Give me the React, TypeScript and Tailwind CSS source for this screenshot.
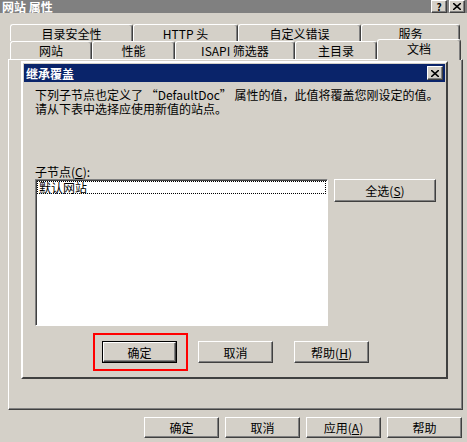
import React from "react";

const raised =
  "border border-t-white border-l-white border-r-[#404040] border-b-[#404040] shadow-[inset_-1px_-1px_0_0_#808080] bg-[#D4D0C8]";

interface BtnProps {
  children: React.ReactNode;
  className?: string;
  isDefault?: boolean;
}

const Btn = ({ children, className = "", isDefault }: BtnProps) => {
  if (isDefault) {
    return (
      <div className={`border border-black flex ${className}`}>
        <div className={`${raised} flex-1 flex items-center justify-center`}>{children}</div>
      </div>
    );
  }
  return <div className={`${raised} flex items-center justify-center ${className}`}>{children}</div>;
};

interface TabProps {
  label: string;
  className?: string;
}

const Tab = ({ label, className = "" }: TabProps) => (
  <div
    className={`border-t border-l border-r border-t-white border-l-white border-r-[#404040] shadow-[inset_-1px_0_0_0_#808080] rounded-t-[3px] bg-[#D4D0C8] flex items-center justify-center ${className}`}
  >
    {label}
  </div>
);

const CapBtn = ({ children }: { children: React.ReactNode }) => (
  <div className={`${raised} w-[16px] h-[13px] flex items-center justify-center text-[10px] font-bold leading-[10px] text-black`}>
    {children}
  </div>
);

export default function App() {
  return (
    <div className="w-[467px] h-[442px] bg-[#D4D0C8] flex flex-col overflow-hidden text-[12px] leading-[13px] text-black font-['Noto_Sans_CJK_SC','Liberation_Sans',sans-serif]">
      {/* title bar */}
      <div className="h-[13px] bg-[#808080] flex items-center justify-between pl-[2px] pr-[2px]">
        <span className="text-white font-bold text-[12px] leading-[13px]">网站 属性</span>
        <div className="flex gap-[2px]">
          <CapBtn>?</CapBtn>
          <CapBtn>
            <svg width="8" height="7" viewBox="0 0 8 7">
              <path d="M0 0 L8 7 M8 0 L0 7" stroke="black" strokeWidth="1.6" />
            </svg>
          </CapBtn>
        </div>
      </div>

      {/* tab rows */}
      <div className="mt-[11px] pl-[10px] flex h-[17px]">
        <Tab label="目录安全性" className="w-[123px]" />
        <Tab label="HTTP 头" className="w-[105px]" />
        <Tab label="自定义错误" className="w-[123px]" />
        <Tab label="服务" className="w-[99px]" />
      </div>
      <div className="pl-[10px] flex items-end h-[18px]">
        <Tab label="网站" className="w-[82px] h-[18px]" />
        <Tab label="性能" className="w-[83px] h-[18px]" />
        <Tab label="ISAPI 筛选器" className="w-[120px] h-[18px]" />
        <Tab label="主目录" className="w-[82px] h-[18px]" />
        <Tab label="文档" className="w-[84px] h-[21px] -mb-[1px] relative z-10 pb-[3px]" />
      </div>

      {/* tab panel */}
      <div className="ml-[8px] w-[455px] h-[351px] border border-t-white border-l-white border-r-[#404040] border-b-[#404040] shadow-[inset_-1px_-1px_0_0_#808080] pt-[1px] pl-[12px]">
        {/* inherit override dialog */}
        <div className="w-[427px] h-[318px] border-2 border-t-white border-l-white border-r-[#404040] border-b-[#404040] p-[1px] flex flex-col">
          <div className="h-[18px] bg-[#0A246A] flex items-center justify-between pl-[2px] pr-[2px]">
            <span className="text-white font-bold text-[12px]">继承覆盖</span>
            <div className={`${raised} w-[16px] h-[14px] flex items-center justify-center`}>
              <svg width="8" height="7" viewBox="0 0 8 7">
                <path d="M0 0 L8 7 M8 0 L0 7" stroke="black" strokeWidth="1.6" />
              </svg>
            </div>
          </div>

          <div className="pl-[11px] flex flex-col">
            <p className="mt-[6px] leading-[14px]">
              下列子节点也定义了 “DefaultDoc” 属性的值，此值将覆盖您刚设定的值。
              <br />
              请从下表中选择应使用新值的站点。
            </p>

            <div className="mt-[49px]">
              子节点(<u>C</u>):
            </div>

            <div className="mt-[1px] flex gap-[6px] items-start">
              <div className="w-[293px] h-[147px] bg-white border border-t-[#808080] border-l-[#808080] border-r-white border-b-white shadow-[inset_1px_1px_0_0_#404040] p-[1px]">
                <div className="border border-dotted border-black h-[13px] leading-[11px] pl-[1px]">默认网站</div>
              </div>
              <Btn className="w-[102px] h-[23px]">
                全选(<u>S</u>)
              </Btn>
            </div>

            <div className="mt-[15px] pl-[67px] flex gap-[21px]">
              <div className="relative">
                <Btn isDefault className="w-[75px] h-[22px]">
                  确定
                </Btn>
                <div className="absolute -left-[9px] -right-[11px] -top-[8px] -bottom-[8px] border-2 border-[#FF0000]" />
              </div>
              <Btn className="w-[75px] h-[22px]">取消</Btn>
              <Btn className="w-[75px] h-[22px]">
                帮助(<u>H</u>)
              </Btn>
            </div>
          </div>
        </div>
      </div>

      {/* window buttons */}
      <div className="mt-[7px] flex justify-end gap-[6px] pr-[5px]">
        <Btn className="w-[75px] h-[21px]">确定</Btn>
        <Btn className="w-[75px] h-[21px]">取消</Btn>
        <Btn className="w-[75px] h-[21px]">
          应用(<u>A</u>)
        </Btn>
        <Btn className="w-[75px] h-[21px]">帮助</Btn>
      </div>
    </div>
  );
}
